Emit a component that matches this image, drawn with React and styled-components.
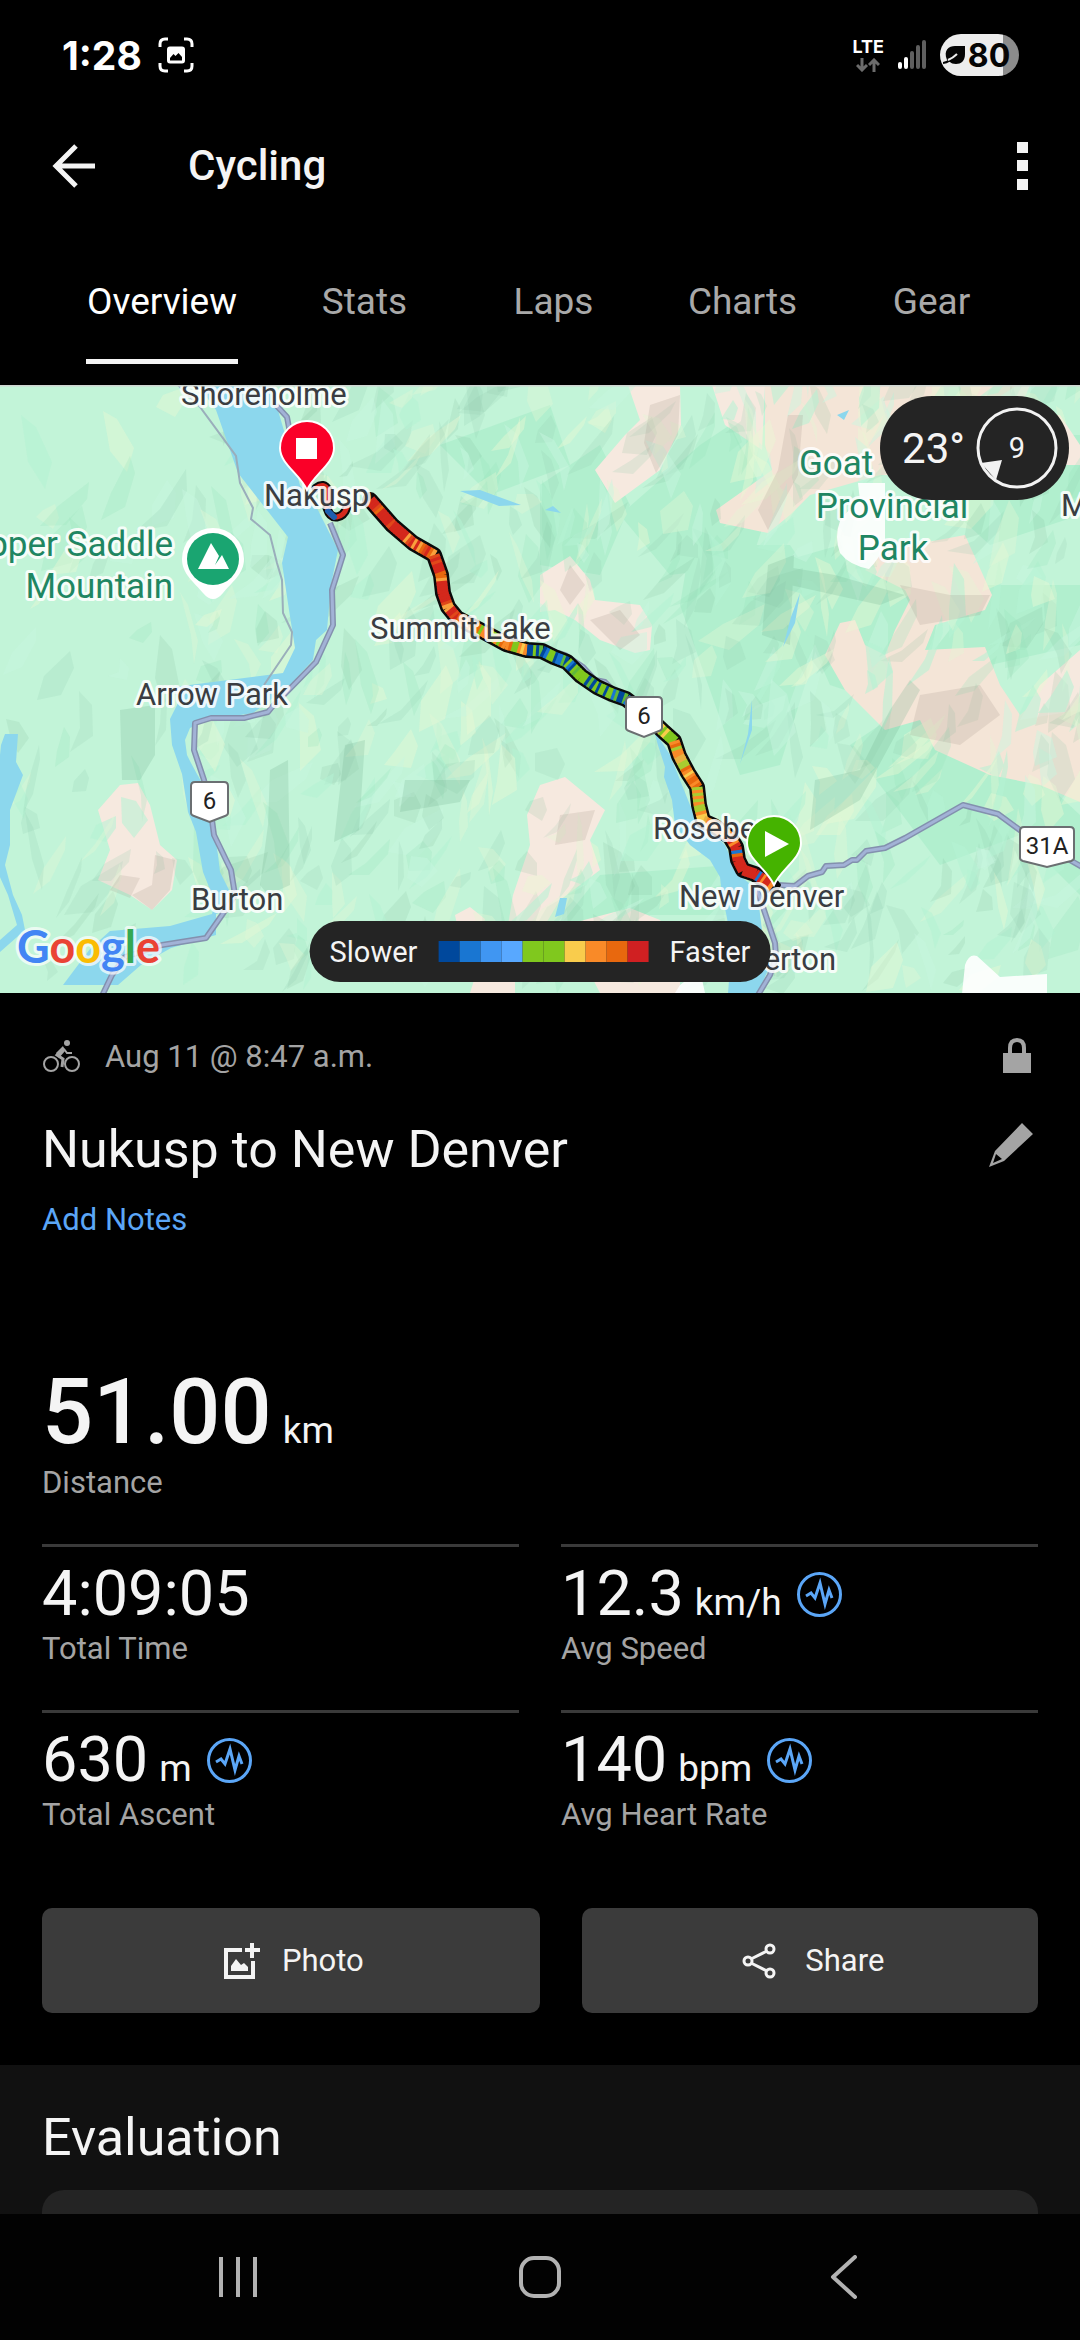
import React, { useState } from 'react'
import styled, { createGlobalStyle } from 'styled-components'

const TABS = ['Overview', 'Stats', 'Laps', 'Charts', 'Gear']

const STATS = [
  { value: '4:09:05', label: 'Total Time' },
  { value: '12.3', unit: 'km/h', label: 'Avg Speed', chart: true },
  { value: '630', unit: 'm', label: 'Total Ascent', chart: true },
  { value: '140', unit: 'bpm', label: 'Avg Heart Rate', chart: true },
]

const SPEED_COLORS = [
  '#00489c',
  '#1976d2',
  '#4096f2',
  '#58a8ff',
  '#80c81e',
  '#80c81e',
  '#f9cc4c',
  '#f98a28',
  '#e8680e',
  '#d02022',
]

const App = () => {
  const [activeTab, setActiveTab] = useState('Overview')
  return (
    <Screen>
      <GlobalStyle />
      <StatusBar />
      <AppBar>
        <IconBtn aria-label="Back">
          <BackArrowIcon />
        </IconBtn>
        <PageTitle>Cycling</PageTitle>
        <IconBtn aria-label="More options">
          <MoreIcon />
        </IconBtn>
      </AppBar>
      <TabNav role="tablist">
        {TABS.map((tab) => (
          <TabBtn
            key={tab}
            role="tab"
            aria-selected={tab === activeTab}
            $active={tab === activeTab}
            onClick={() => setActiveTab(tab)}
          >
            <span>{tab}</span>
          </TabBtn>
        ))}
      </TabNav>
      <MapPanel>
        <RouteMap />
        <WeatherBadge>
          23°
          <Wind>
            <WindDial />
            <span>9</span>
          </Wind>
        </WeatherBadge>
        <Legend>
          Slower
          <LegendBar>
            {SPEED_COLORS.map((color, i) => (
              <Swatch key={i} $color={color} />
            ))}
          </LegendBar>
          Faster
        </Legend>
      </MapPanel>
      <Summary>
        <MetaRow>
          <BikeIcon />
          <MetaText>Aug 11 @ 8:47 a.m.</MetaText>
          <LockIcon />
        </MetaRow>
        <TitleRow>
          <ActivityTitle>Nukusp to New Denver</ActivityTitle>
          <EditBtn aria-label="Edit name">
            <PencilIcon />
          </EditBtn>
        </TitleRow>
        <NotesLink href="#notes">Add Notes</NotesLink>
        <Distance>
          <ValueRow $big>
            51.00<Unit>km</Unit>
          </ValueRow>
          <StatLabel>Distance</StatLabel>
        </Distance>
        <StatGrid>
          {STATS.map((stat) => (
            <StatCell key={stat.label}>
              <ValueRow>
                {stat.value}
                {stat.unit && <Unit>{stat.unit}</Unit>}
                {stat.chart && (
                  <ChartBtn aria-label={`${stat.label} chart`}>
                    <WaveIcon />
                  </ChartBtn>
                )}
              </ValueRow>
              <StatLabel>{stat.label}</StatLabel>
            </StatCell>
          ))}
        </StatGrid>
        <Actions>
          <ActionBtn>
            <AddPhotoIcon />
            Photo
          </ActionBtn>
          <ActionBtn>
            <ShareIcon />
            Share
          </ActionBtn>
        </Actions>
      </Summary>
      <Evaluation>
        <SectionTitle>Evaluation</SectionTitle>
        <EvaluationCard />
      </Evaluation>
      <SystemNav>
        <NavBtn aria-label="Recents">
          <svg width="44" height="44" viewBox="0 0 44 44" stroke="currentColor" strokeWidth="4">
            <path d="M5 2v40M22 2v40M39 2v40" />
          </svg>
        </NavBtn>
        <NavBtn aria-label="Home">
          <svg width="44" height="44" viewBox="0 0 44 44" fill="none" stroke="currentColor" strokeWidth="4">
            <rect x="3" y="3" width="38" height="38" rx="13" />
          </svg>
        </NavBtn>
        <NavBtn aria-label="Back">
          <svg width="44" height="44" viewBox="0 0 44 44" fill="none" stroke="currentColor" strokeWidth="4">
            <path d="M35 2L13 22l22 20" strokeLinejoin="round" strokeLinecap="round" />
          </svg>
        </NavBtn>
      </SystemNav>
    </Screen>
  )
}

export default App

const StatusBar = () => (
  <StatusRow>
    <Clock>1:28</Clock>
    <svg width="36" height="36" viewBox="0 0 36 36" fill="none" stroke="#fff" strokeWidth="3">
      <path d="M2 10V7q0-5 5-5h3M26 2h3q5 0 5 5v3M34 26v3q0 5-5 5h-3M10 34H7q-5 0-5-5v-3" />
      <path
        d="M12 9.500h12q3 0 3 3v11q0 3-3 3H12q-3 0-3-3v-11q0-3 3-3z M12 23.500h12v-3.500l-3.500-4-3 3-2-2-3.500 4z"
        fill="#fff"
        fillRule="evenodd"
        stroke="none"
      />
    </svg>
    <StatusRight>
      <Network>
        LTE
        <svg width="24" height="14" viewBox="0 0 24 14" fill="none" stroke="#6c6c6c" strokeWidth="3">
          <path d="M6 0v12M1 7l5 5 5-5M18 14V2M13 7l5-5 5 5" />
        </svg>
      </Network>
      <svg width="28" height="30" viewBox="0 0 28 30" strokeWidth="4" strokeLinecap="round">
        <path d="M2 24v3M8 19v8" stroke="#fff" />
        <path d="M14 13v14M20 7v20M26 2v25" stroke="#5f5f5f" />
      </svg>
      <Battery>
        <svg width="22" height="20" viewBox="0 0 22 20">
          <path d="M4 15C0 5 6 1 12 1h10v8c0 7-4 10-9 10-3 0-5-1-6-2z" fill="#050505" />
          <path d="M0 18q7-1 13-8" fill="none" stroke="#050505" strokeWidth="2" />
          <path d="M5 15q5-2 9-6" fill="none" stroke="#ededed" strokeWidth="2" />
        </svg>
        80
      </Battery>
    </StatusRight>
  </StatusRow>
)

const BackArrowIcon = () => (
  <svg width="44" height="44" viewBox="0 0 44 44" fill="none" stroke="currentColor" strokeWidth="5">
    <path d="M25 2L5 22l20 20M6 22h38" />
  </svg>
)

const MoreIcon = () => (
  <svg width="12" height="48" viewBox="0 0 12 48" fill="currentColor">
    <path d="M0 0h11v11H0zM0 18h11v11H0zM0 37h11v11H0z" />
  </svg>
)

const WindDial = () => (
  <svg width="82" height="82" viewBox="0 0 82 82">
    <circle cx="41" cy="41" r="39" fill="none" stroke="#f2f2f2" strokeWidth="3" />
    <path d="M5 56l21-3-6 20z" fill="#f2f2f2" />
  </svg>
)

const BikeIcon = () => (
  <svg width="38" height="34" viewBox="0 0 38 34" fill="none" stroke="currentColor" strokeWidth="2">
    <circle cx="9" cy="25" r="7" />
    <circle cx="30" cy="25" r="7" />
    <circle cx="25" cy="4" r="3" fill="currentColor" stroke="none" />
    <path d="M22 9L15 16l6 4-1 8" strokeWidth="3" />
    <path d="M21 7l-7 7 3 5 6-7z" fill="currentColor" stroke="none" />
    <path d="M22 10l3 4h5" />
  </svg>
)

const LockIcon = () => (
  <svg width="28" height="36" viewBox="0 0 28 36">
    <path d="M0 15h28v20H0z" fill="currentColor" />
    <path d="M7 16V10q0-8 7-8t7 8v6" fill="none" stroke="currentColor" strokeWidth="4" />
  </svg>
)

const PencilIcon = () => (
  <svg width="44" height="44" viewBox="0 0 44 44">
    <path d="M33 0L44 11 15 38 0 44 6 28zM7 31L4 40l9-4z" fill="currentColor" fillRule="evenodd" />
  </svg>
)

const WaveIcon = () => (
  <svg width="45" height="45" viewBox="0 0 45 45" fill="none" stroke="#5ba6f7" strokeWidth="3">
    <circle cx="22.500" cy="22.500" r="21" />
    <path d="M9 24l5-3 4 5 5-15 5 21 4-14 3 8" />
  </svg>
)

const AddPhotoIcon = () => (
  <svg width="36" height="36" viewBox="0 0 36 36">
    <path d="M18 7H2v27h27V18" fill="none" stroke="currentColor" strokeWidth="4" />
    <path d="M28 0v15M21 7h15" stroke="currentColor" strokeWidth="4" />
    <path d="M7 28v-5l5-7 5 6 3-2 4 4v4z" fill="currentColor" />
  </svg>
)

const ShareIcon = () => (
  <svg width="42" height="36" viewBox="0 0 42 36" fill="none" stroke="currentColor" strokeWidth="3">
    <circle cx="7" cy="18" r="4" />
    <circle cx="29" cy="6" r="4" />
    <circle cx="29" cy="30" r="4" />
    <path d="M10 16L26 8M10 20l16 8" />
  </svg>
)

// small seeded generator, keeps the terrain and the track colours stable between renders
const seeded = (seed) => () => {
  seed = (seed * 16807) % 2147483647
  return seed / 2147483647
}

const TERRAIN_TONES = [
  ['#79b795', 0.15],
  ['#98e4bd', 0.25],
  ['#e9f9d4', 0.42],
  ['#e2f8d6', 0.36],
  ['#b4f2d4', 0.55],
  ['#c8f6e0', 0.45],
  ['#86bfa2', 0.14],
  ['#8cc8aa', 0.18],
]

const buildTerrain = () => {
  const rand = seeded(4217)
  const facets = []
  for (let i = 0; i < 780; i++) {
    const x = i < 50 ? rand() * 200 : 180 + rand() * 900
    const y = rand() * 608
    const length = 20 + rand() * 60
    const width = 5 + rand() * 18
    const angle = -2 + rand() * 1.5
    const dx = Math.cos(angle)
    const dy = Math.sin(angle)
    const bend = rand() - 0.4
    const points = [
      [x, y],
      [x + dx * length * 0.3 - dy * width, y + dy * length * 0.3 + dx * width],
      [x + dx * length * 0.8 - dy * width * 0.7, y + dy * length * 0.8 + dx * width * 0.7],
      [x + dx * length, y + dy * length],
      [x + dx * length * 0.4 + dy * width * bend, y + dy * length * 0.4 - dx * width * bend],
    ]
    const tone = TERRAIN_TONES[Math.floor(rand() * TERRAIN_TONES.length)]
    facets.push({ points: points.map((p) => p.map(Math.round).join(',')).join(' '), tone })
  }
  return facets
}

const TRACK = [
  [370, 115], [392, 140], [413, 158], [434, 170], [441, 190], [443, 208], [448, 222], [457, 233],
  [482, 246], [506, 259], [527, 265], [542, 266], [554, 272], [567, 277], [581, 291], [597, 302],
  [612, 309], [626, 314], [644, 328], [664, 347], [674, 356], [679, 371], [688, 388], [697, 402],
  [699, 420], [703, 436], [714, 441], [730, 452], [736, 462], [738, 475], [743, 485], [755, 489],
  [764, 495], [772, 501],
]

const TRACK_ZONES = [
  { until: 450, colors: ['#d4281c', '#d4281c', '#d4281c', '#e8680e', '#e0481a', '#f9a03c', '#d4281c'] },
  { until: 515, colors: ['#f98a28', '#f9cc4c', '#e8680e', '#80c81e', '#f98a28'] },
  { until: 625, colors: ['#80c81e', '#80c81e', '#1976d2', '#00489c', '#80c81e', '#5fb83a'] },
  { until: 674, colors: ['#1976d2', '#80c81e', '#f9cc4c', '#80c81e'] },
  { until: 725, colors: ['#f98a28', '#f9cc4c', '#e8680e', '#f98a28', '#a8cc30', '#e8b040'] },
  { until: 900, colors: ['#d4281c', '#d4281c', '#e8680e', '#d4281c', '#1976d2', '#f98a28'] },
]

const buildTrack = () => {
  const rand = seeded(93)
  const pieces = []
  for (let i = 0; i < TRACK.length - 1; i++) {
    const [x1, y1] = TRACK[i]
    const [x2, y2] = TRACK[i + 1]
    const steps = Math.max(2, Math.round(Math.hypot(x2 - x1, y2 - y1) / 3))
    for (let s = 0; s < steps; s++) {
      const zone = TRACK_ZONES.find((z) => x1 < z.until)
      pieces.push({
        x1: x1 + ((x2 - x1) * s) / steps,
        y1: y1 + ((y2 - y1) * s) / steps,
        x2: x1 + ((x2 - x1) * (s + 1.3)) / steps,
        y2: y1 + ((y2 - y1) * (s + 1.3)) / steps,
        stroke: zone.colors[Math.floor(rand() * zone.colors.length)],
      })
    }
  }
  return pieces
}

const terrain = buildTerrain()
const track = buildTrack()

const HIGHWAYS = [
  'M276 20l11 12 3 16M330 138l13 32-11 35 1 35-17 37-44 45-4 5-24 6h-33l-16 5-1 27 10 30 6 25 4 30 17 35 4 25-13 20-16 23-44 7-37 12-13 18-12 25',
  'M540 262l25 8 18 12 12 13 10 2 12 12 20 10',
  'M778 500l17 1 13-10 14-4 4-6 18-1 8-5h5l9-9 19-3 20-10 58-33 35 9 30 22 54 31 6 12',
  'M757 504l18 54 1 14-6 18-12 20',
]

const RouteMap = () => (
  <MapSvg viewBox="0 0 1080 608" preserveAspectRatio="xMidYMid slice" role="img" aria-label="Route map">
    <rect width="1080" height="608" fill="#c2f4d8" />
    <g fill="#a8edca" opacity="0.65">
      <path d="M700 60l30-20 40 80-20 60-80 10-50-60zM690 160l100 0 40 60-50 160-40 10-60-170z" />
      <path d="M770 180l70-20 100 60-20 110-90-30-40-90zM985 200l95 0v60l-90 20-60-10z" />
      <path d="M540 100l60-40 30 60-30 70-60-10zM600 490l130-10 10 50-90 0-30 30-60-20z" />
      <path d="M850 360l90-60 140 130v80l-60-60-80 30zM880 60l60-10 140 0v80l-90 30z" />
      <path d="M440 60l110-40 20 60-80 30z" />
    </g>
    <g fill="#f6e9df">
      <path d="M628 0h52l1 40-21 45-45 33-20-33 30-35 15-15zM712 0h53l-3 65-37-25z" />
      <path d="M765 0h165l60 10 35 20-80 60-65 0-70 20-20 20-22 18-48-10-4-13 24-17 32-23-7-25z" fill="#f4e5d7" />
      <path d="M890 0h140l-5 12-50 15-85-2z" fill="#f4e5d7" />
      <path
        d="M865 185l20-20 80-15 27 60-7 15-50 15-10 25 60-3 15 38 20 30 60-50v137l-40-17-50-10-55-25-15-30-35 10-40-40-20-35 15-32 15-3 10 25 20 10 10-25 15-30-5-10z"
        fill="#f4e5d7"
      />
      <path d="M540 190l30-19 20 24 5 20 45 5 12 20-2 25-15 3-35-13-25-20-20-10-15 2z" />
      <path d="M540 400l25-8 40 33-15 30 10 30-40 30-15 25h-37l5-30 17-50-3-30z" />
      <path d="M565 540l65-17 30 12 20 25v48h-80zM455 530l15-8 15 12-5 20h-20zM470 608l5-16h40v16z" />
      <path d="M98 425l22-25 18-2 12 22 10 40 17 15-5 30-20 20-22-15-32-15 12-30z" />
      <path d="M1040 300l40-35v60l-60 10zM640 607l30-20 12 20zM1010 30l50 0 20 30v20l-50 0z" />
    </g>
    {terrain.map((facet, i) => (
      <polygon key={i} points={facet.points} fill={facet.tone[0]} opacity={facet.tone[1]} />
    ))}
    <g fill="#fff" opacity="0.9">
      <path d="M858 98h27v62q-6 14-16 24-20-4-29-16-6-16 0-32 6-10 20-20zM965 580q4-12 12-9l23 21 47-3v20h-85zM680 600l20-15 5 23h-30z" />
    </g>
    <g fill="#9a8c80" opacity="0.18">
      <path d="M650 20l30-10-2 40-22 38-12-30zM788 30h15l-5 60-30 55-10-20 20-40zM900 200l50 10 40 0-10 20-60 10z" />
      <path d="M920 310l60-10 20 30-40 30-50-10zM570 180l15 20-15 20-10-15zM590 235l30-10 20 25-20 15z" />
      <path d="M155 470l20 5-5 30-18 20-20-15 20-10zM560 430l35-5-10 30-30 5zM120 490l20 3-10 20-20-8z" />
    </g>
    <g fill="#6fae8c" opacity="0.22">
      <path d="M768 180l26-10-4 90-28-10zM815 395l45-10 30-60 20-30 10 10-60 110-50 30zM120 325l35-5 0 50-15 25-18 0z" />
      <path d="M270 385l18-10 2 125-22 10-8-10 8-60zM345 360l20-5-6 90-25 12zM405 395l65 0-10 22-60 10zM775 180l60 10 70 20-25 10-90-20z" />
    </g>
    <g fill="#8cd7ed">
      <path d="M198 0h72l7 22 23 78 18 25 20 40-7 35-4 45-11 10-3 20-23 25-37 28-45 7-18 8-5 12 2 15 4 8 12 22 10 40 5 30 2 17 9 18 5 17-18 7 0 21-45 13-30 17-23 20H63l27-36 20-18 60-5 42-12 3-12-12-30-7-40-8-20-6-38-10-29-2-26 8-16-4-16 109-14 12-25-6-38-7-47 6-26-25-32-25-32-22-63-29-40z" />
      <path d="M5 349h13l-2 28 7 13-13 35v35l-5 20 8 30 9 20 3 15-25 22v-12l17-15-9-30-9-20v-110l2-20z" />
      <path d="M654 345l16 25 20 50 14 20 21 20 12 28 20 17 5 40 8 35-12 28h-30l4-48-6-32-4-18-2-18-10-17-20-15-15-20-3-25-8-23 1-10-8-25z" />
      <path d="M460 106l20-1 41 15-22 1zM837 30l12-5-5 10zM545 125l8-4 8 7zM800 208l-5 30-12 24 8-30zM752 315l0 30-12 34 8-30zM560 513h7l-3 16-9 3z" />
    </g>
    <path
      d="M178 0l22 22 36 49 4 27 13 25-2 11 19 16 7 28 5 17 1 33 9 19-1 13-27 40"
      fill="none"
      stroke="#9aaebb"
      strokeWidth="2"
    />
    {HIGHWAYS.map((d) => (
      <g key={d} fill="none" strokeLinejoin="round">
        <path d={d} stroke="#8390ae" strokeWidth="6" />
        <path d={d} stroke="#a2b2d6" strokeWidth="3" />
      </g>
    ))}
    <g fill="none" strokeLinejoin="round" strokeLinecap="round">
      <path d="M316 103q8-6 12 2l-1 18q3 10 10 9t10-10" stroke="#0b0b0b" strokeWidth="9" />
      <path d="M316 103q8-6 12 2l-1 18q3 10 10 9t10-10" stroke="#d4281c" strokeWidth="5" />
      <path d="M328 126l6 6" stroke="#1c5fb0" strokeWidth="6" />
      <polyline points={TRACK.map((p) => p.join(',')).join(' ')} stroke="#0b0b0b" strokeWidth="16" />
    </g>
    {track.map((piece, i) => (
      <line key={i} {...piece} strokeWidth="11" />
    ))}
    <circle cx="779" cy="500" r="2" fill="#0b0b0b" />

    <Place x="181" y="20">Shoreholme</Place>
    <Place x="264" y="121">Nakusp</Place>
    <Place x="370" y="254">Summit Lake</Place>
    <Place x="136" y="320">Arrow Park</Place>
    <Place x="191" y="525">Burton</Place>
    <Place x="653" y="454">Rosebery</Place>
    <Place x="679" y="522">New Denver</Place>
    <Place x="836" y="585" textAnchor="end">Silverton</Place>
    <Place x="1061" y="131">M</Place>
    <ParkName x="173" y="171" textAnchor="end">Upper Saddle</ParkName>
    <ParkName x="173" y="213" textAnchor="end">Mountain</ParkName>
    <ParkName x="799" y="90">Goat</ParkName>
    <ParkName x="892" y="133" textAnchor="middle">Provincial</ParkName>
    <ParkName x="893" y="175" textAnchor="middle">Park</ParkName>

    <Shield x={190} y={396} width={39} name="6" />
    <Shield x={625} y={311} width={38} name="6" />
    <Shield x={1019} y={441} width={56} name="31A" />

    <path d="M182 174a31 31 0 0 1 62 0c0 15-12 23-21 34q-10 12-20 0c-9-11-21-19-21-34z" fill="#fff" />
    <circle cx="213" cy="174" r="26" fill="#1aa571" />
    <path d="M198 184l13-26 8 13-4 9 7-10 7 14z" fill="#fff" />

    <path d="M307 105c-7-16-27-26-27-42a27 27 0 0 1 54 0c0 16-20 26-27 42z" fill="#fa0028" stroke="#fff" strokeWidth="2" />
    <path d="M296 53h21v21h-21z" fill="#fff" />
    <path d="M774 500c-7-16-27-26-27-42a27 27 0 0 1 54 0c0 16-20 26-27 42z" fill="#45b300" stroke="#fff" strokeWidth="2" />
    <path d="M765 446v26l24-13z" fill="#fff" />

    <GoogleMark x="17" y="578">
      <tspan fill="#4285f4">G</tspan>
      <tspan fill="#ea4335">o</tspan>
      <tspan fill="#fbbc04">o</tspan>
      <tspan fill="#4285f4">g</tspan>
      <tspan fill="#34a853">l</tspan>
      <tspan fill="#ea4335">e</tspan>
    </GoogleMark>
    <path d="M0 0h1080" stroke="#cfd6d2" strokeWidth="3" />
  </MapSvg>
)

const Shield = ({ x, y, width, name }) => (
  <g transform={`translate(${x} ${y})`}>
    <path
      d={`M5 1H${width - 5}q4 0 4 4v27q0 2-3 3L${width / 2} 41 4 35q-3-1-3-3V5q0-4 4-4z`}
      fill="#fff"
      stroke="#6b6f72"
      strokeWidth="2"
    />
    <ShieldText x={width / 2} y="28" textAnchor="middle">
      {name}
    </ShieldText>
  </g>
)

const GlobalStyle = createGlobalStyle`
  * {
    box-sizing: border-box;
  }
  body {
    margin: 0;
    background: #000;
    color: #f4f4f4;
    font-family: Roboto, sans-serif;
  }
  button {
    padding: 0;
    border: 0;
    background: none;
    color: inherit;
    font: inherit;
    cursor: pointer;
  }
  svg {
    display: block;
    flex-shrink: 0;
  }
`
const Screen = styled.div`
  display: flex;
  flex-direction: column;
  min-height: 100vh;
`
const StatusRow = styled.div`
  display: flex;
  align-items: center;
  gap: 16px;
  height: 110px;
  padding: 0 61px 0 62px;
  font-family: Inter, sans-serif;
  font-weight: 700;
  color: #fff;
`
const Clock = styled.span`
  font-size: 39px;
`
const StatusRight = styled.div`
  display: flex;
  align-items: center;
  gap: 14px;
  margin-left: auto;
`
const Network = styled.div`
  display: flex;
  flex-direction: column;
  align-items: center;
  gap: 2px;
  font-size: 18px;
  line-height: 18px;
`
const Battery = styled.div`
  display: flex;
  align-items: center;
  justify-content: center;
  gap: 3px;
  width: 79px;
  height: 42px;
  padding-right: 6px;
  border-radius: 21px;
  background: linear-gradient(to right, #ededed 80%, #8c8c8c 80%);
  color: #050505;
  font-size: 32px;
`
const AppBar = styled.header`
  display: flex;
  align-items: center;
  height: 111px;
  padding: 0 51px;
`
const PageTitle = styled.h1`
  flex: 1;
  margin: 0 0 0 93px;
  font-size: 42px;
  font-weight: 500;
`
const IconBtn = styled.button`
  display: flex;
`
const TabNav = styled.nav`
  display: grid;
  grid-template-columns: 8fr repeat(4, 7fr);
  padding: 0 54px 21px;
`
const TabBtn = styled.button`
  display: flex;
  justify-content: center;
  color: ${(props) => (props.$active ? '#fff' : '#a9a9a9')};
  font-size: 37px;
  line-height: 48px;
  span {
    padding: 57px 1px 33px;
    border-bottom: 5px solid ${(props) => (props.$active ? '#f4f4f4' : 'transparent')};
  }
`
const MapPanel = styled.section`
  position: relative;
  overflow: hidden;
`
const MapSvg = styled.svg`
  width: 100%;
  height: auto;
`
const Place = styled.text`
  fill: #3a3d42;
  stroke: rgba(255, 255, 255, 0.85);
  stroke-width: 6px;
  stroke-linejoin: round;
  paint-order: stroke;
  font-size: 31px;
`
const ParkName = styled(Place)`
  fill: #1f8662;
  font-size: 35px;
`
const ShieldText = styled.text`
  fill: #222;
  font-size: 24px;
`
const GoogleMark = styled.text`
  stroke: rgba(255, 255, 255, 0.7);
  stroke-width: 6px;
  stroke-linejoin: round;
  paint-order: stroke;
  font-family: Lato, sans-serif;
  font-size: 45px;
  font-weight: 700;
`
const WeatherBadge = styled.div`
  position: absolute;
  top: 11px;
  right: 11px;
  display: flex;
  align-items: center;
  gap: 11px;
  padding: 11px 11px 11px 22px;
  border-radius: 52px;
  background: #242424;
  font-size: 42px;
`
const Wind = styled.div`
  display: grid;
  place-items: center;
  font-size: 29px;
  > * {
    grid-area: 1 / 1;
  }
`
const Legend = styled.div`
  position: absolute;
  bottom: 11px;
  left: 50%;
  transform: translateX(-50%);
  display: flex;
  align-items: center;
  gap: 21px;
  height: 61px;
  padding: 0 20px;
  border-radius: 31px;
  background: #242424;
  font-size: 29px;
`
const LegendBar = styled.div`
  display: flex;
`
const Swatch = styled.span`
  width: 21px;
  height: 21px;
  background: ${(props) => props.$color};
`
const Summary = styled.main`
  padding: 42px 42px 52px;
`
const MetaRow = styled.div`
  display: flex;
  align-items: center;
  height: 42px;
  padding-right: 7px;
  color: #a4a4a4;
`
const MetaText = styled.span`
  flex: 1;
  margin-left: 25px;
  font-size: 31px;
`
const TitleRow = styled.div`
  display: flex;
  justify-content: space-between;
  margin-top: 41px;
`
const ActivityTitle = styled.h2`
  margin: 0;
  font-size: 52px;
  font-weight: 400;
  line-height: 64px;
`
const EditBtn = styled.button`
  display: flex;
  align-items: center;
  height: 54px;
  padding-right: 5px;
  color: #a4a4a4;
`
const NotesLink = styled.a`
  display: inline-block;
  margin-top: 18px;
  color: #5ba6f7;
  font-size: 31px;
  line-height: 40px;
  text-decoration: none;
`
const Distance = styled.div`
  margin-top: 123px;
  padding-bottom: 41px;
`
const ValueRow = styled.div`
  display: flex;
  align-items: baseline;
  font-size: ${(props) => (props.$big ? '90px' : '63px')};
  font-weight: ${(props) => (props.$big ? 500 : 400)};
  line-height: ${(props) => (props.$big ? '100px' : '70px')};
`
const Unit = styled.span`
  margin-left: 11px;
  font-size: 37px;
  font-weight: 400;
  line-height: 40px;
`
const ChartBtn = styled.button`
  align-self: center;
  margin-left: 15px;
`
const StatLabel = styled.div`
  color: #a4a4a4;
  font-size: 31px;
  line-height: 40px;
`
const StatGrid = styled.div`
  display: grid;
  grid-template-columns: 1fr 1fr;
  column-gap: 42px;
`
const StatCell = styled.div`
  padding: 12px 0 41px;
  border-top: 3px solid #3a3a3a;
`
const Actions = styled.div`
  display: grid;
  grid-template-columns: 12fr 11fr;
  gap: 42px;
  margin-top: 32px;
`
const ActionBtn = styled.button`
  display: flex;
  align-items: center;
  justify-content: center;
  gap: 22px;
  height: 105px;
  padding-left: 6px;
  border-radius: 10px;
  background: #3b3b3b;
  font-size: 31px;
`
const Evaluation = styled.section`
  display: flex;
  flex: 1;
  flex-direction: column;
  padding: 41px 42px 0;
  background: #111;
`
const SectionTitle = styled.h2`
  margin: 0 0 20px;
  font-size: 52px;
  font-weight: 400;
  line-height: 64px;
`
const EvaluationCard = styled.div`
  flex: 1;
  min-height: 24px;
  border-radius: 22px 22px 0 0;
  background: #242424;
`
const SystemNav = styled.nav`
  display: grid;
  grid-template-columns: repeat(3, 28%);
  justify-content: center;
  height: 126px;
  background: #020202;
  color: #b2b2b2;
`
const NavBtn = styled.button`
  display: flex;
  align-items: center;
  justify-content: center;
`
